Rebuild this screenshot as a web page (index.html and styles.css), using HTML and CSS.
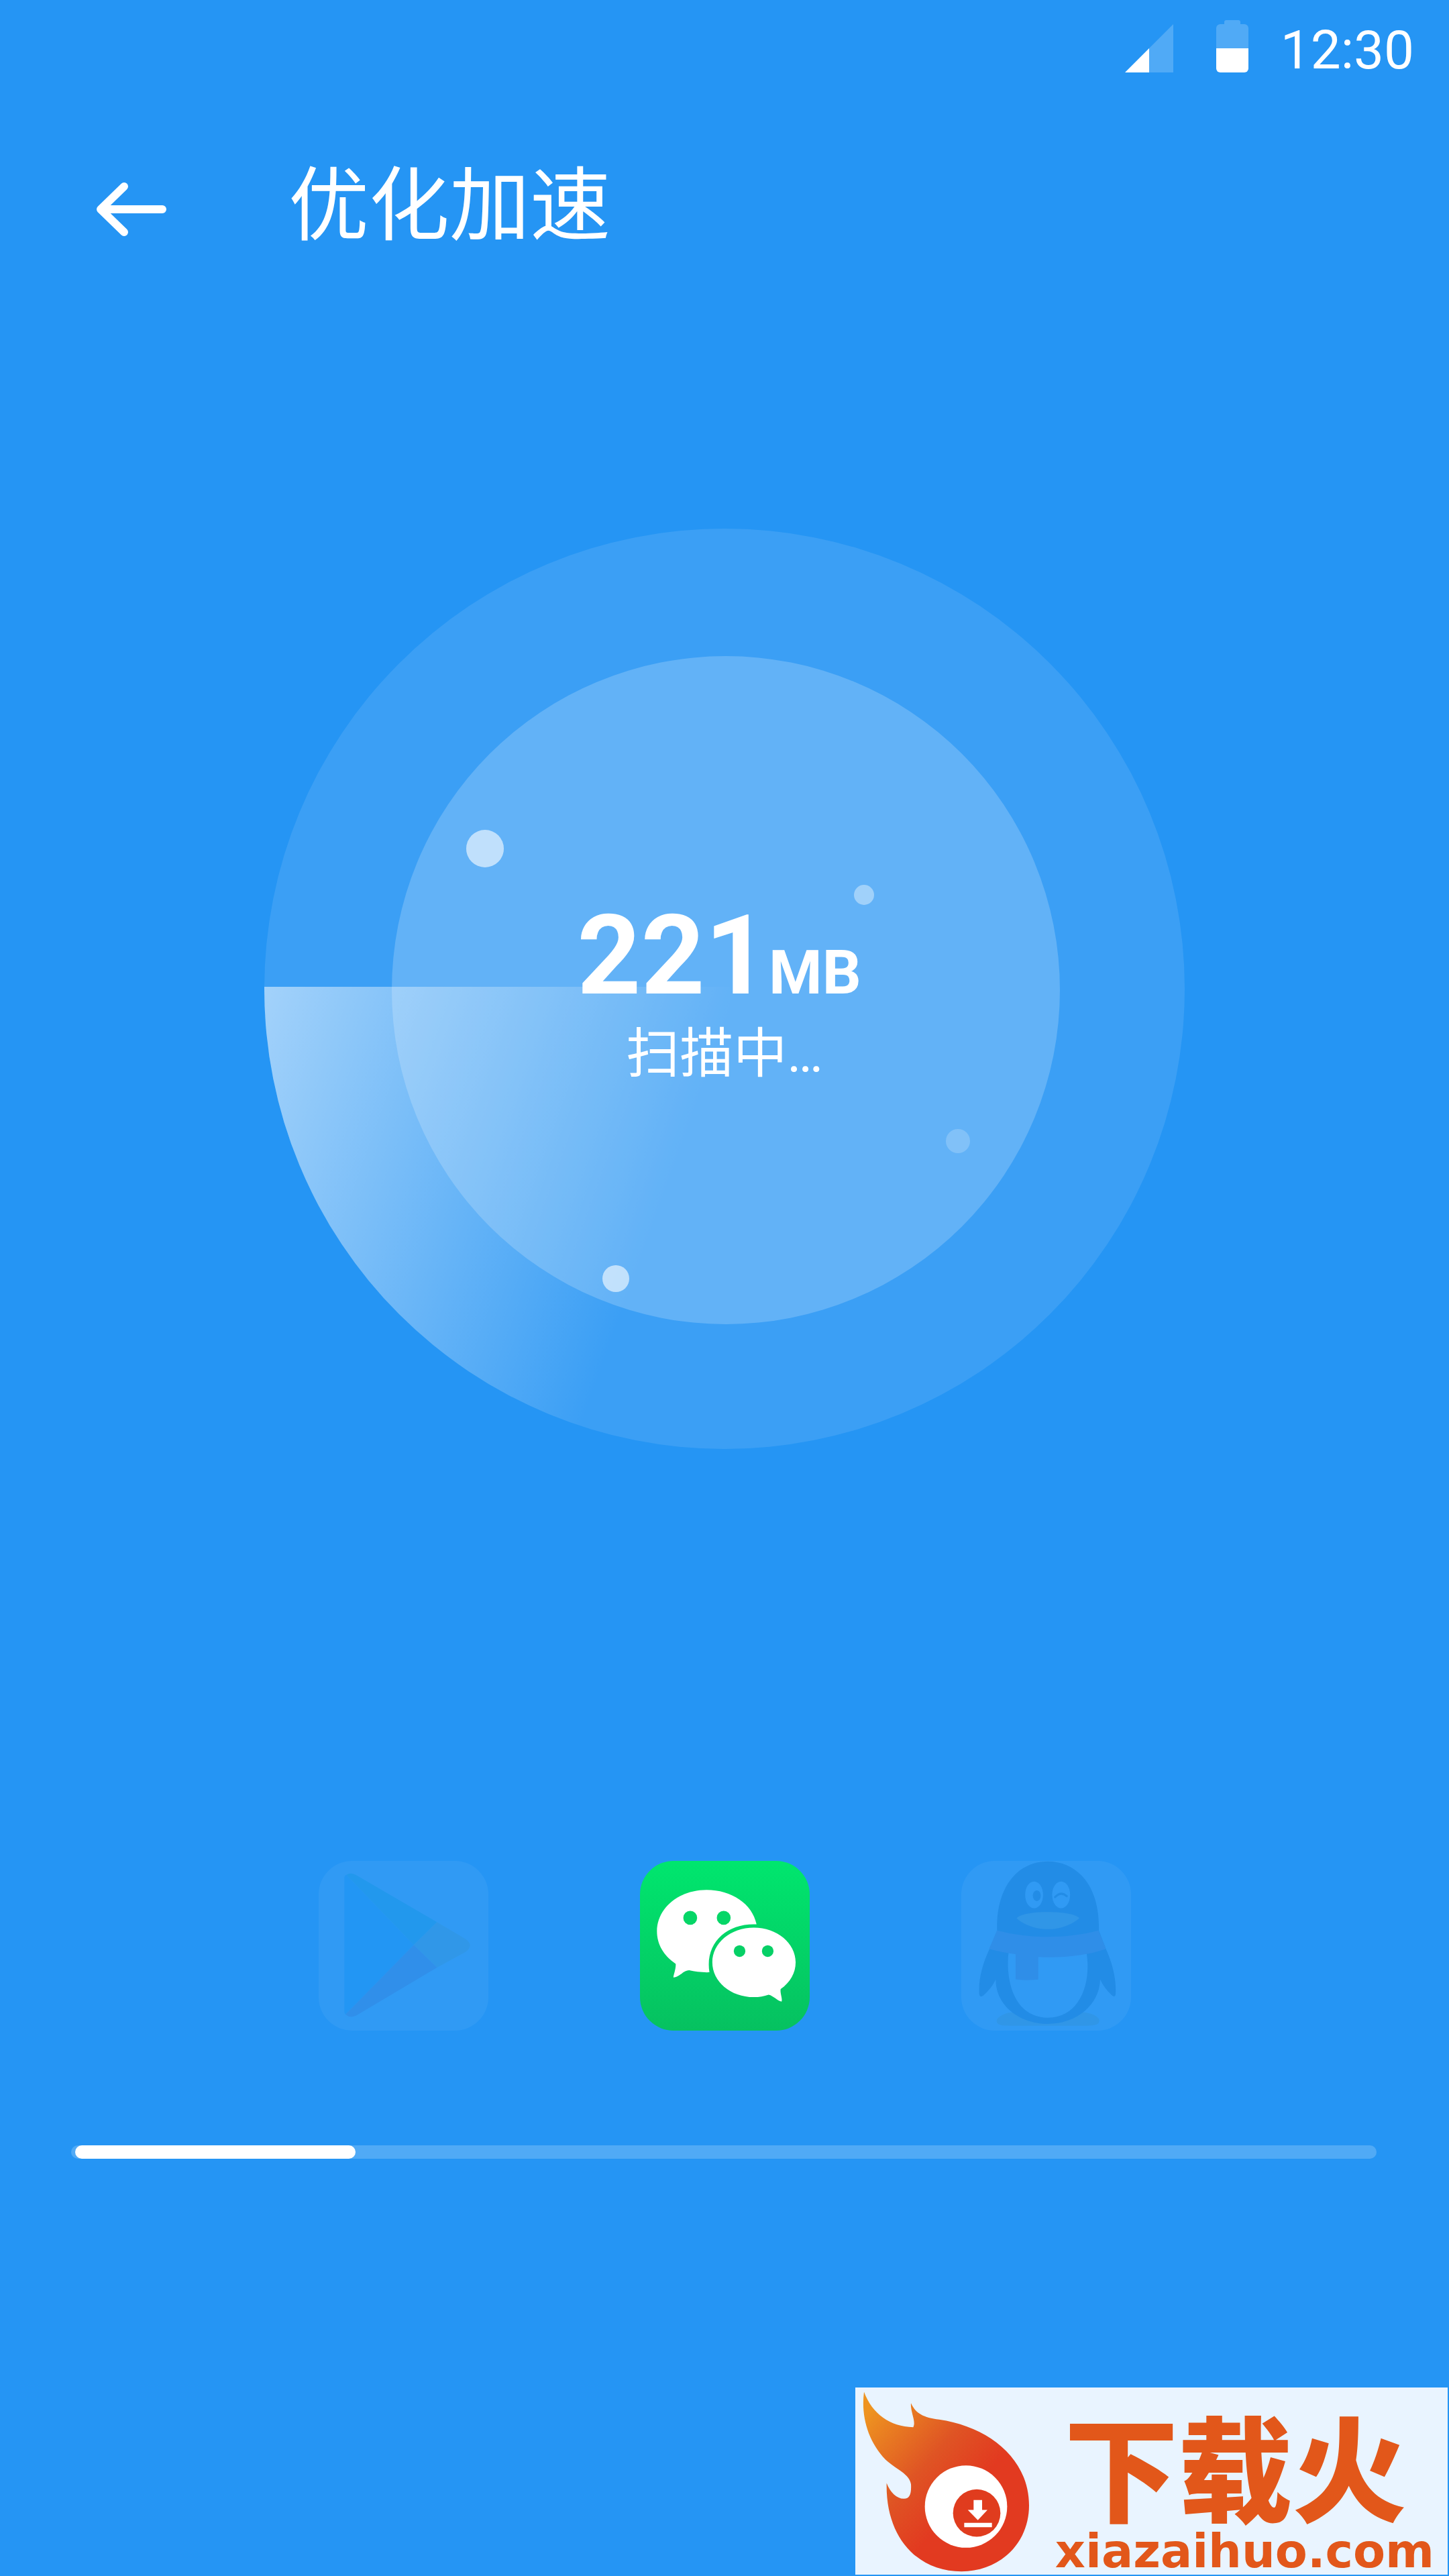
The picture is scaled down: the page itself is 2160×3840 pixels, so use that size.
FILE: index.html
```html
<!DOCTYPE html>
<html lang="zh-CN">
<head>
    <meta charset="UTF-8">
    <meta name="viewport" content="width=device-width, initial-scale=1.0">
    <title>优化加速</title>
    <link rel="stylesheet" href="styles.css">
</head>
<body>
    <div class="status-bar">
        <svg class="signal" viewBox="0 0 72 72" aria-hidden="true">
            <path d="M36 36 72 0V72H36Z" fill="#fff" fill-opacity=".2"/>
            <path d="M0 72 36 36V72Z" fill="#fff"/>
        </svg>
        <svg class="battery" viewBox="0 0 48 78" aria-hidden="true">
            <path d="M0 42V12a6 6 0 0 1 6-6H12V3a3 3 0 0 1 3-3H33a3 3 0 0 1 3 3V6H42a6 6 0 0 1 6 6V42Z" fill="#fff" fill-opacity=".2"/>
            <path d="M0 42H48V72a6 6 0 0 1-6 6H6a6 6 0 0 1-6-6Z" fill="#fff"/>
        </svg>
        <span class="time">12:30</span>
    </div>

    <header class="header">
        <button type="button" class="back" aria-label="返回">
            <svg viewBox="0 0 104 80" aria-hidden="true">
                <path d="M41 6 6 40 41 74M8 40H98" fill="none" stroke="#fff" stroke-width="12" stroke-linecap="round" stroke-linejoin="round"/>
            </svg>
        </button>
        <h1>优化加速</h1>
    </header>

    <main>
        <div class="scanner">
            <svg class="radar" viewBox="0 0 1372 1372" aria-hidden="true">
                <defs>
                    <linearGradient id="sweep" gradientUnits="userSpaceOnUse" x1="0" y1="683" x2="628" y2="909">
                        <stop offset="0" stop-color="#fff" stop-opacity=".53"/>
                        <stop offset="1" stop-color="#fff" stop-opacity="0"/>
                    </linearGradient>
                </defs>
                <circle cx="686" cy="686" r="686" fill="#fff" fill-opacity=".1"/>
                <path d="M0 683H694V1372H686A686 686 0 0 1 0 686Z" fill="url(#sweep)"/>
                <circle cx="688" cy="688" r="498" fill="#fff" fill-opacity=".2"/>
                <circle cx="329" cy="477" r="28" fill="#fff" fill-opacity=".6"/>
                <circle cx="894" cy="546" r="15" fill="#fff" fill-opacity=".4"/>
                <circle cx="1034" cy="913" r="18" fill="#fff" fill-opacity=".2"/>
                <circle cx="524" cy="1118" r="20" fill="#fff" fill-opacity=".6"/>
            </svg>
            <div class="reading">
                <p class="amount">221<span class="unit">MB</span></p>
                <p class="state">扫描中…</p>
            </div>
        </div>

        <div class="apps">
            <svg class="app faded" viewBox="102 102 760 760" role="img" aria-label="Google Play">
                <rect x="102" y="102" width="760" height="760" fill="#fff"/>
                <path d="M217 178Q217 168 226 164L528 478 222 790Q217 784 217 776Z" fill="#00a8f8"/>
                <path d="M226 164Q244 152 268 164L632 376 528 478Z" fill="#00d878"/>
                <path d="M632 376 760 452Q800 480 760 510L632 580 528 478Z" fill="#ffc820"/>
                <path d="M222 790Q244 808 272 794L632 580 528 478Z" fill="#f0304a"/>
            </svg>
            <svg class="app" viewBox="72 72 760 760" role="img" aria-label="微信">
                <defs>
                    <linearGradient id="wechat" x1="0" y1="0" x2="0" y2="1">
                        <stop offset="0" stop-color="#00e66e"/>
                        <stop offset="1" stop-color="#06c160"/>
                    </linearGradient>
                </defs>
                <rect x="72" y="72" width="760" height="760" fill="url(#wechat)"/>
                <path d="M232 533C180 498 148 448 148 387C148 285 245 202 370 202C482 202 575 264 594 356C460 350 362 440 383 571C350 572 318 568 292 562C268 562 248 592 222 594C220 588 234 555 232 533Z" fill="#fff"/>
                <path d="M702 646C745 615 769 573 769 526C769 440 685 371 582 371C478 371 396 440 396 526C396 612 478 682 582 682C606 682 628 678 648 671C670 676 688 698 706 702C712 694 698 662 702 646Z" fill="#fff"/>
                <circle cx="297" cy="327" r="31" fill="#06d667"/>
                <circle cx="447" cy="327" r="31" fill="#06d667"/>
                <circle cx="518" cy="476" r="26" fill="#06d066"/>
                <circle cx="644" cy="476" r="26" fill="#06d066"/>
            </svg>
            <svg class="app faded" viewBox="66 72 760 760" role="img" aria-label="QQ">
                <rect x="66" y="72" width="760" height="760" fill="#fff"/>
                <path d="M290 750C250 755 224 775 224 790C226 808 250 810 280 810H630C665 810 684 804 684 788C684 770 650 752 612 750Z" fill="#faab07"/>
                <path d="M226 384C220 190 318 74 453 74C590 74 688 190 682 384L714 466C742 530 762 600 757 672C752 684 744 678 738 672C716 652 700 630 688 604C684 720 580 802 453 802C326 802 220 720 220 604C206 634 186 656 164 676C154 682 148 680 146 668C142 600 162 530 192 466Z"/>
                <path d="M278 480C262 620 310 774 453 774C596 774 650 620 626 480Z" fill="#fff"/>
                <path d="M226 384C370 422 540 422 680 384L714 466C618 498 510 508 411 502V603Q360 610 309 602V490C268 484 228 476 190 466Z" fill="#eb1923"/>
                <ellipse cx="392" cy="224" rx="40" ry="60" fill="#fff"/>
                <ellipse cx="513" cy="224" rx="40" ry="60" fill="#fff"/>
                <ellipse cx="404" cy="228" rx="18" ry="24"/>
                <path d="M486 234Q512 206 538 230" fill="none" stroke="#000" stroke-width="10" stroke-linecap="round"/>
                <path d="M314 329C340 292 566 292 594 329C570 350 520 378 453 378C386 378 336 350 314 329Z" fill="#faab07"/>
            </svg>
        </div>

        <div class="progress" role="progressbar" aria-label="扫描进度" aria-valuemin="0" aria-valuemax="100" aria-valuenow="22">
            <div class="progress-fill" style="width: 21.6%"></div>
        </div>
    </main>

    <aside class="badge">
        <svg class="flame" viewBox="75 65 750 815" aria-hidden="true">
            <defs>
                <linearGradient id="fire" gradientUnits="userSpaceOnUse" x1="90" y1="180" x2="520" y2="560">
                    <stop offset="0" stop-color="#ee9320"/>
                    <stop offset=".6" stop-color="#df5424"/>
                    <stop offset="1" stop-color="#e23a20"/>
                </linearGradient>
            </defs>
            <path d="M84 72C120 170 200 228 304 230C318 205 290 160 294 122C316 170 350 186 420 196C640 228 822 370 822 580C822 750 690 875 520 875C320 875 180 720 185 480C200 520 230 550 262 550C290 550 296 525 294 485C288 440 230 420 180 375C100 290 70 180 84 72Z" fill="url(#fire)"/>
            <circle cx="540" cy="585" r="184" fill="#fff"/>
            <circle cx="588" cy="614" r="106" fill="#e03c1e"/>
            <path d="M574 556H612V600H636L593 646 548 600H574ZM532 658H656V677H532Z" fill="#fff"/>
        </svg>
        <div class="badge-text">
            <span class="badge-name">下载火</span>
            <span class="badge-site">xiazaihuo.com</span>
        </div>
    </aside>
</body>
</html>
```

FILE: styles.css
```css
* {
    box-sizing: border-box;
}

body {
    position: relative;
    min-height: 100vh;
    margin: 0;
    background-color: #2595f4;
    color: #fff;
    font-family: Roboto, "Noto Sans CJK SC", sans-serif;
}

h1, p {
    margin: 0;
    font-weight: normal;
}

.status-bar {
    display: flex;
    justify-content: flex-end;
    align-items: flex-end;
    height: 144px;
    padding: 0 52px 36px 0;
}

.signal {
    width: 72px;
    height: 72px;
    margin-right: 64px;
}

.battery {
    width: 48px;
    height: 78px;
    margin-right: 48px;
}

.time {
    font-size: 80px;
    line-height: 66px;
}

.header {
    display: flex;
    align-items: center;
    height: 336px;
    padding: 0 144px;
    gap: 182px;
}

.back {
    width: 104px;
    height: 80px;
    padding: 0;
    border: none;
    background: none;
    cursor: pointer;
}

.back svg {
    display: block;
}

.header h1 {
    padding-bottom: 30px;
    font-family: "Noto Sans CJK SC", sans-serif;
    font-size: 120px;
    line-height: 160px;
}

.scanner {
    display: grid;
    place-items: center;
    width: 1372px;
    max-width: 100%;
    margin: 308px auto 0;
}

.radar, .reading {
    grid-area: 1 / 1;
}

.radar {
    display: block;
    width: 100%;
}

.reading {
    padding-top: 30px;
    text-align: center;
}

.amount {
    padding-right: 16px;
    font-size: 166px;
    font-weight: bold;
    line-height: 138px;
}

.unit {
    font-size: 91px;
}

.state {
    font-size: 80px;
    line-height: 104px;
}

.apps {
    display: flex;
    justify-content: center;
    gap: 226px;
    margin-top: 614px;
}

.app {
    width: 253px;
    height: 253px;
    border-radius: 50px;
}

.faded {
    opacity: 0.05;
}

.progress {
    height: 20px;
    margin: 171px 108px 0 106px;
    padding: 0 6px;
    border-radius: 10px;
    background-color: rgba(255, 255, 255, 0.2);
}

.progress-fill {
    height: 20px;
    border-radius: 10px;
    background-color: #fff;
}

.badge {
    position: absolute;
    right: 2px;
    bottom: 2px;
    display: flex;
    align-items: center;
    gap: 10px;
    width: 883px;
    height: 279px;
    padding: 0 10px;
    background-color: #e9f4ff;
    color: #e2571a;
}

.flame {
    width: 250px;
    height: 272px;
    flex: none;
}

.badge-text {
    display: flex;
    flex-direction: column;
    align-items: flex-end;
    align-self: stretch;
    flex: 1;
    gap: 12px;
    padding: 28px 10px 0 0;
}

.badge-name {
    align-self: center;
    font-family: "Noto Sans CJK SC", sans-serif;
    font-size: 170px;
    font-weight: 900;
    line-height: 172px;
}

.badge-site {
    font-family: "DejaVu Sans", sans-serif;
    font-size: 70px;
    font-weight: bold;
    line-height: 64px;
}
```
